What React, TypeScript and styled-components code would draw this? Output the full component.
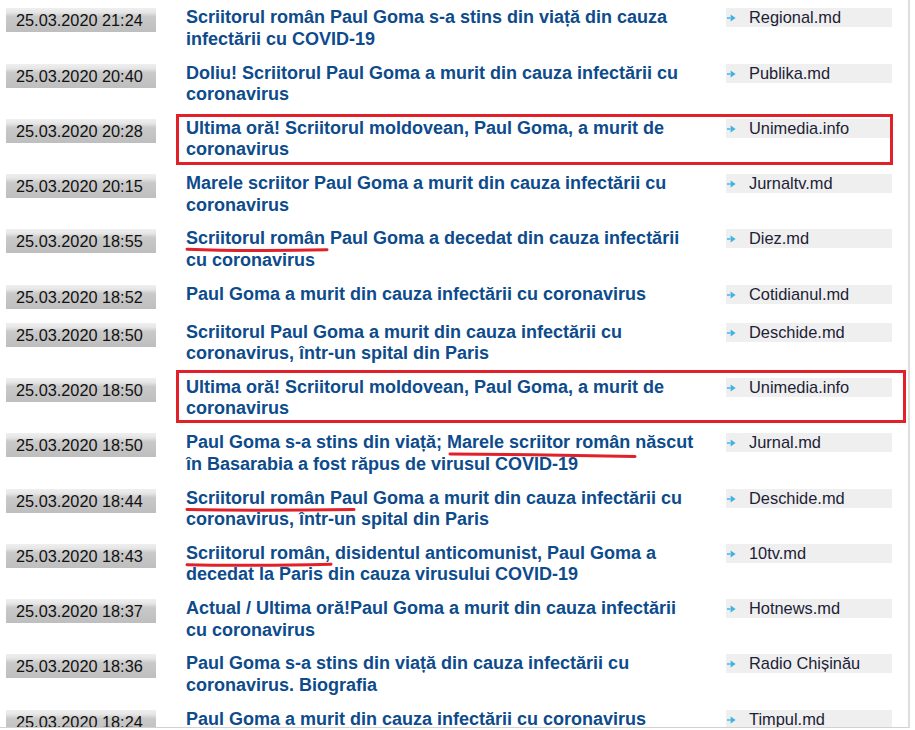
import React from "react";
import styled, { createGlobalStyle } from "styled-components";

const Global = createGlobalStyle`
  html, body { margin: 0; padding: 0; background: #ffffff; }
  body { font-family: "Liberation Sans", Arial, sans-serif; }
`;

const Frame = styled.div`
  width: 908px;
  height: 727px;
  overflow: hidden;
  border-right: 2px solid #dedede;
  border-bottom: 1px solid #d2d2d2;
  background: #ffffff;
`;

const List = styled.div`
  display: flex;
  flex-direction: column;
  padding: 7.25px 0 0 6px;
`;

const Row = styled.div`
  position: relative;
  display: grid;
  grid-template-columns: 150px 512px 164px;
  column-gap: 30px;
  align-items: start;
  padding-bottom: 12.3px;
`;

const DateBox = styled.div`
  margin-top: 1px;
  margin-bottom: 0.6px;
  height: 24px;
  box-sizing: border-box;
  padding-left: 10px;
  font-size: 16.3px;
  line-height: 24px;
  color: #111111;
  white-space: nowrap;
  background: linear-gradient(
    to bottom,
    #efefef 0%,
    #e6e6e6 18%,
    #c9c9c9 36%,
    #bebebe 100%
  );
`;

const Title = styled.a`
  display: block;
  font-size: 18px;
  font-weight: bold;
  line-height: 21.5px;
  color: #0d4b8c;
  text-decoration: none;
`;

const Source = styled.div`
  margin-left: -2px;
  margin-top: 1px;
  height: 19px;
  display: flex;
  align-items: center;
  gap: 13px;
  padding-left: 1px;
  background: #efefef;
  font-size: 16.4px;
  line-height: 19px;
  color: #1c2236;
  white-space: nowrap;
`;

const Arrow = styled.svg`
  flex: none;
  width: 9px;
  height: 8px;
  margin-top: 1px;
`;

const Highlight = styled.div<{ $top: number; $width: number; $height: number }>`
  position: absolute;
  left: 170px;
  top: ${(p) => p.$top}px;
  width: ${(p) => p.$width}px;
  height: ${(p) => p.$height}px;
  box-sizing: border-box;
  border: 3px solid #e1202a;
  pointer-events: none;
`;

const Scribble = styled.svg<{ $left: number; $top: number; $width: number }>`
  position: absolute;
  left: ${(p) => p.$left}px;
  top: ${(p) => p.$top}px;
  width: ${(p) => p.$width}px;
  height: 8px;
  overflow: visible;
  pointer-events: none;
`;

type Mark = { left: number; top: number; width: number; d: string };

type Item = {
  date: string;
  title: string;
  source: string;
  box?: { top: number; width: number; height: number };
  mark?: Mark;
};

const items: Item[] = [
  {
    date: "25.03.2020 21:24",
    title: "Scriitorul român Paul Goma s-a stins din viață din cauza infectării cu COVID-19",
    source: "Regional.md",
  },
  {
    date: "25.03.2020 20:40",
    title: "Doliu! Scriitorul Paul Goma a murit din cauza infectării cu coronavirus",
    source: "Publika.md",
  },
  {
    date: "25.03.2020 20:28",
    title: "Ultima oră! Scriitorul moldovean, Paul Goma, a murit de coronavirus",
    source: "Unimedia.info",
    box: { top: -3.5, width: 717, height: 51 },
  },
  {
    date: "25.03.2020 20:15",
    title: "Marele scriitor Paul Goma a murit din cauza infectării cu coronavirus",
    source: "Jurnaltv.md",
  },
  {
    date: "25.03.2020 18:55",
    title: "Scriitorul român Paul Goma a decedat din cauza infectării cu coronavirus",
    source: "Diez.md",
    mark: { left: 180, top: 19, width: 142, d: "M1 2.2 C 40 3.6, 100 3.6, 141 2.8" },
  },
  {
    date: "25.03.2020 18:52",
    title: "Paul Goma a murit din cauza infectării cu coronavirus",
    source: "Cotidianul.md",
  },
  {
    date: "25.03.2020 18:50",
    title: "Scriitorul Paul Goma a murit din cauza infectării cu coronavirus, într-un spital din Paris",
    source: "Deschide.md",
  },
  {
    date: "25.03.2020 18:50",
    title: "Ultima oră! Scriitorul moldovean, Paul Goma, a murit de coronavirus",
    source: "Unimedia.info",
    box: { top: -7, width: 730, height: 53 },
  },
  {
    date: "25.03.2020 18:50",
    title:
      "Paul Goma s-a stins din viață; Marele scriitor român născut în Basarabia a fost răpus de virusul COVID-19",
    source: "Jurnal.md",
    mark: { left: 443, top: 20, width: 187, d: "M1 2 C 60 2.6, 130 3.2, 186 4.4" },
  },
  {
    date: "25.03.2020 18:44",
    title:
      "Scriitorul român Paul Goma a murit din cauza infectării cu coronavirus, într-un spital din Paris",
    source: "Deschide.md",
    mark: { left: 180, top: 19.5, width: 169, d: "M1 2.6 C 50 3.4, 120 3.2, 168 2.4" },
  },
  {
    date: "25.03.2020 18:43",
    title:
      "Scriitorul român, disidentul anticomunist, Paul Goma a decedat la Paris din cauza virusului COVID-19",
    source: "10tv.md",
    mark: { left: 180, top: 19.5, width: 146, d: "M1 2.8 C 40 3.6, 100 3.2, 145 2.2" },
  },
  {
    date: "25.03.2020 18:37",
    title: "Actual / Ultima oră!Paul Goma a murit din cauza infectării cu coronavirus",
    source: "Hotnews.md",
  },
  {
    date: "25.03.2020 18:36",
    title: "Paul Goma s-a stins din viață din cauza infectării cu coronavirus. Biografia",
    source: "Radio Chișinău",
  },
  {
    date: "25.03.2020 18:24",
    title: "Paul Goma a murit din cauza infectării cu coronavirus",
    source: "Timpul.md",
  },
];

const SourceArrow = () => (
  <Arrow viewBox="0 0 9 8">
    <line x1="0" y1="4" x2="3.5" y2="4" stroke="#3fb2e4" strokeWidth="1.4" />
    <polygon points="3.6,0.6 8.6,4 3.6,7.4" fill="#3fb2e4" />
  </Arrow>
);

export default function App() {
  return (
    <>
      <Global />
      <Frame>
        <List>
          {items.map((it, i) => (
            <Row key={i}>
              <DateBox>{it.date}</DateBox>
              <Title href="#">{it.title}</Title>
              <Source>
                <SourceArrow />
                <span>{it.source}</span>
              </Source>
              {it.box && (
                <Highlight $top={it.box.top} $width={it.box.width} $height={it.box.height} />
              )}
              {it.mark && (
                <Scribble
                  $left={it.mark.left}
                  $top={it.mark.top}
                  $width={it.mark.width}
                  viewBox={`0 0 ${it.mark.width} 8`}
                >
                  <path
                    d={it.mark.d}
                    fill="none"
                    stroke="#e1202a"
                    strokeWidth="3"
                    strokeLinecap="round"
                  />
                </Scribble>
              )}
            </Row>
          ))}
        </List>
      </Frame>
    </>
  );
}
